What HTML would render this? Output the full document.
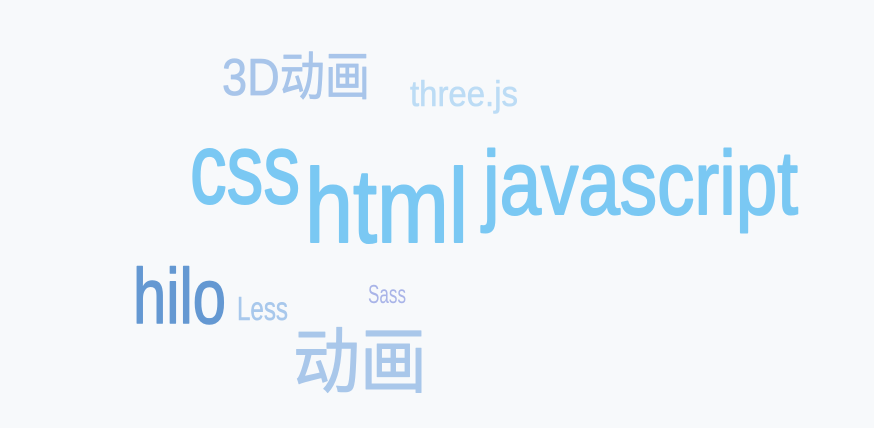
<!DOCTYPE html>
<html><head><meta charset="utf-8"><style>
html,body{margin:0;padding:0;background:#f7f9fb;width:874px;height:428px;overflow:hidden}
svg{display:block}
text{font-family:"Liberation Sans","Noto Sans CJK SC",sans-serif;stroke-linejoin:round}
</style></head><body>
<svg width="874" height="428" viewBox="0 0 874 428">
<rect width="874" height="428" fill="#f7f9fb"/>
<text x="222" y="95" font-size="52" fill="#a8c5ea" stroke="#a8c5ea" stroke-width="0.8" textLength="148" lengthAdjust="spacingAndGlyphs">3D动画</text>
<text x="410" y="106" font-size="36" fill="#bcdcf5" stroke="#bcdcf5" stroke-width="0.6" textLength="108" lengthAdjust="spacingAndGlyphs">three.js</text>
<text x="190" y="203" font-size="100" fill="#7ac8f3" stroke="#7ac8f3" stroke-width="2" textLength="110" lengthAdjust="spacingAndGlyphs">css</text>
<text x="305" y="242" font-size="105" fill="#7ac8f3" stroke="#7ac8f3" stroke-width="2" textLength="163" lengthAdjust="spacingAndGlyphs">html</text>
<text x="483" y="214" font-size="90" fill="#7ac8f3" stroke="#7ac8f3" stroke-width="2" textLength="315" lengthAdjust="spacingAndGlyphs">javascript</text>
<text x="133" y="323" font-size="78" fill="#6498d2" stroke="#6498d2" stroke-width="1.5" textLength="93" lengthAdjust="spacingAndGlyphs">hilo</text>
<text x="237" y="320" font-size="33" fill="#a8c8ec" stroke="#a8c8ec" stroke-width="0.5" textLength="51" lengthAdjust="spacingAndGlyphs">Less</text>
<text x="368" y="303" font-size="26" fill="#a9b4e8" textLength="38" lengthAdjust="spacingAndGlyphs">Sass</text>
<text x="293" y="387" font-size="72" fill="#a9c7ea" stroke="#a9c7ea" stroke-width="1" textLength="134" lengthAdjust="spacingAndGlyphs">动画</text>
</svg>
</body></html>
